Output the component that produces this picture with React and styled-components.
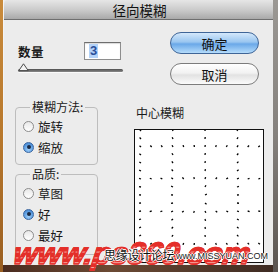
import React from "react";
import styled, { createGlobalStyle, css } from "styled-components";

const GlobalStyle = createGlobalStyle`
    html, body {
        margin: 0;
        padding: 0;
        background: #3a2f29;
        overflow: hidden;
    }
    body {
        font-family: "Noto Sans CJK SC", "Noto Sans", sans-serif;
    }
`

const Frame = styled.div`
    position: relative;
    display: flex;
    width: 278px;
    height: 272px;
    background: linear-gradient(90deg, #4a2b1f 0%, #6b4a34 40%, #3d2a22 100%);
    overflow: hidden;
`

const LeftEdge = styled.div`
    width: 3px;
    background: linear-gradient(180deg, #c98b3c 0%, #b8782c 50%, #9a5f22 100%);
`

const RightEdge = styled.div`
    flex: 1;
    background: linear-gradient(180deg, #9b9894 0%, #85817d 50%, #5a5450 100%);
`

const Window = styled.div`
    width: 270px;
    height: 265px;
    display: flex;
    flex-direction: column;
    background: #ececec;
    border-left: 1px solid #f4f4f4;
    box-sizing: border-box;
`

const TitleBar = styled.div`
    height: 20px;
    flex: none;
    display: flex;
    align-items: center;
    justify-content: center;
    background: linear-gradient(180deg, #e6e6e6 0%, #c9c9c9 55%, #a9a9a9 100%);
    border-bottom: 1px solid #6f6f6f;
    border-top-left-radius: 4px;
    box-sizing: border-box;
    font-size: 13.5px;
    color: #111;
    padding-left: 2px;
`

const Body = styled.div`
    flex: 1;
    padding-top: 12px;
`

const TopRow = styled.div`
    display: flex;
    justify-content: space-between;
    padding: 0 14px 0 13px;
`

const AmountBlock = styled.div`
    width: 107px;
    padding-top: 10px;
`

const AmountLine = styled.div`
    display: flex;
    align-items: center;
    justify-content: space-between;
    height: 18px;
    padding-right: 3px;
    padding-left: 1px;
`

const Label = styled.span`
    font-size: 12.5px;
    font-weight: 600;
    color: #1a1a1a;
    letter-spacing: 0.5px;
`

const NumberBox = styled.div`
    width: 37px;
    height: 18px;
    box-sizing: border-box;
    background: #fff;
    border: 1px solid #8e8e8e;
    border-top-color: #6e6e6e;
    box-shadow: inset 0 1px 1px rgba(0, 0, 0, 0.15);
    display: flex;
    align-items: center;
    padding-left: 4px;
`

const Selected = styled.span`
    background: #b4d3f8;
    color: #2a4f9a;
    font-family: "Liberation Sans", Arial, sans-serif;
    font-weight: bold;
    font-size: 13px;
    line-height: 14px;
    padding: 0 1px;
`

const Slider = styled.div`
    position: relative;
    margin-top: 6px;
    height: 8px;
    display: flex;
    align-items: center;
    padding-left: 1px;
`

const Track = styled.div`
    width: 105px;
    height: 3px;
    border-radius: 2px;
    background: linear-gradient(180deg, #4e4e4e, #8a8a8a);
    box-shadow: 0 1px 0 #fafafa;
`

const Thumb = styled.svg`
    position: absolute;
    left: 1px;
    top: -3px;
`

const ButtonColumn = styled.div`
    display: flex;
    flex-direction: column;
    gap: 9px;
`

const Button = styled.div`
    width: 89px;
    height: 22px;
    box-sizing: border-box;
    border-radius: 11px;
    display: flex;
    align-items: center;
    justify-content: center;
    font-size: 13px;
    color: #111;
    ${p => p.$primary ? css`
        border: 1px solid #3f6597;
        background: linear-gradient(180deg, #d4e8fb 0%, #9ac6f0 45%, #6aa8e8 55%, #b5dcfb 100%);
    ` : css`
        border: 1px solid #7c7c7c;
        background: linear-gradient(180deg, #ffffff 0%, #f2f2f2 45%, #e2e2e2 55%, #fbfbfb 100%);
    `}
`

const BottomRow = styled.div`
    display: flex;
    margin-top: 15px;
    padding-left: 11px;
    gap: 36px;
`

const LeftColumn = styled.div`
    width: 83px;
    display: flex;
    flex-direction: column;
    gap: 2px;
`

const Group = styled.fieldset`
    margin: 0;
    min-inline-size: 0;
    border: 1px solid #bdbdbd;
    border-radius: 4px;
    padding: 2px 0 ${p => p.$bottom}px 7px;
    display: flex;
    flex-direction: column;
    gap: 1px;
`

const Legend = styled.legend`
    margin-left: 7px;
    padding: 0 2px;
    font-size: 12px;
    line-height: 14px;
    color: #1a1a1a;
`

const RadioRow = styled.div`
    height: 20px;
    display: flex;
    align-items: center;
    gap: 4px;
    font-size: 12.5px;
    color: #1a1a1a;
`

const Circle = styled.span`
    width: 11px;
    height: 11px;
    border-radius: 50%;
    box-sizing: border-box;
    display: flex;
    align-items: center;
    justify-content: center;
    ${p => p.$on ? css`
        border: 1px solid #3a66a0;
        background: radial-gradient(circle at 50% 70%, #9fd0fb 0%, #5a9be0 60%, #3f7fc9 100%);
        &::after {
            content: "";
            width: 4px;
            height: 4px;
            border-radius: 50%;
            background: #1b2a44;
        }
    ` : css`
        border: 1px solid #8c8c8c;
        background: linear-gradient(180deg, #e8e8e8 0%, #ffffff 100%);
    `}
`

const PreviewColumn = styled.div`
    display: flex;
    flex-direction: column;
`

const PreviewLabel = styled.div`
    margin-top: 6px;
    padding-left: 2px;
    font-size: 12px;
    line-height: 14px;
    color: #1a1a1a;
`

const PreviewBox = styled.div`
    margin-top: 9px;
    width: 130px;
    height: 134px;
    box-sizing: border-box;
    border: 1px solid #111;
    background: #fff;
`

const Watermark = styled.div`
    position: absolute;
    left: 14px;
    top: 238px;
    font-family: "Liberation Sans", Arial, sans-serif;
    font-weight: bold;
    font-style: italic;
    font-size: 31px;
    line-height: 32px;
    letter-spacing: -0.3px;
    color: #e3302b;
    background: repeating-linear-gradient(180deg, #e62e28 0px, #e62e28 4px, #f8b4ad 4px, #f8b4ad 5px);
    -webkit-background-clip: text;
    background-clip: text;
    -webkit-text-fill-color: transparent;
    -webkit-text-stroke: 1.2px #e3302b;
    transform: skewX(-8deg);
`

const SiteName = styled.div`
    position: absolute;
    left: 104px;
    top: 247px;
    font-size: 12px;
    line-height: 16px;
    letter-spacing: -0.3px;
    color: #111;
    text-shadow: 1px 0 0 #fff, -1px 0 0 #fff, 0 1px 0 #fff, 0 -1px 0 #fff;
`

const SiteUrl = styled.div`
    position: absolute;
    left: 176px;
    top: 250px;
    font-family: "Liberation Sans", Arial, sans-serif;
    font-size: 9px;
    line-height: 12px;
    color: #222;
    text-shadow: 1px 0 0 #fff, -1px 0 0 #fff, 0 1px 0 #fff, 0 -1px 0 #fff;
`

const dots = (() => {
    const list = [];
    const cx = 64;
    const cy = 68;
    const add = (x, y) => {
        const dx = x - cx;
        const dy = y - cy;
        const len = Math.hypot(dx, dy) || 1;
        list.push([x, y, x + (dx / len) * 2, y + (dy / len) * 2]);
    };
    [6, 38, 70, 102].forEach(x => {
        for (let y = 1; y < 131; y += 8) add(x, y);
    });
    [17, 49, 81, 113].forEach(y => {
        for (let x = 6 + 32 / 3; x < 128; x += 32 / 3) {
            if (Math.abs(((x - 6) % 32)) > 1 && Math.abs(((x - 6) % 32) - 32) > 1) add(x, y);
        }
    });
    return list;
})();

const RadialPreview = () => (
    <svg width="128" height="132" viewBox="0 0 128 132">
        {dots.map(([x1, y1, x2, y2], i) => (
            <line key={i} x1={x1} y1={y1} x2={x2} y2={y2} stroke="#000" strokeWidth="1.3" />
        ))}
    </svg>
)

const Radio = ({ on, children }) => (
    <RadioRow>
        <Circle $on={on} />
        {children}
    </RadioRow>
)

const App = () => {
    return (
        <Frame>
            <GlobalStyle />
            <LeftEdge />
            <Window>
                <TitleBar>径向模糊</TitleBar>
                <Body>
                    <TopRow>
                        <AmountBlock>
                            <AmountLine>
                                <Label>数量</Label>
                                <NumberBox><Selected>3</Selected></NumberBox>
                            </AmountLine>
                            <Slider>
                                <Track />
                                <Thumb width="11" height="9" viewBox="0 0 11 9">
                                    <path d="M5.5 0.8 L10.2 7.6 L0.8 7.6 Z" fill="#f4f4f4" stroke="#4a4a4a" strokeWidth="1" />
                                </Thumb>
                            </Slider>
                        </AmountBlock>
                        <ButtonColumn>
                            <Button $primary>确定</Button>
                            <Button>取消</Button>
                        </ButtonColumn>
                    </TopRow>
                    <BottomRow>
                        <LeftColumn>
                            <Group $bottom={7}>
                                <Legend>模糊方法:</Legend>
                                <Radio>旋转</Radio>
                                <Radio on>缩放</Radio>
                            </Group>
                            <Group $bottom={9}>
                                <Legend>品质:</Legend>
                                <Radio>草图</Radio>
                                <Radio on>好</Radio>
                                <Radio>最好</Radio>
                            </Group>
                        </LeftColumn>
                        <PreviewColumn>
                            <PreviewLabel>中心模糊</PreviewLabel>
                            <PreviewBox>
                                <RadialPreview />
                            </PreviewBox>
                        </PreviewColumn>
                    </BottomRow>
                </Body>
            </Window>
            <RightEdge />
            <Watermark>www.ps360.com</Watermark>
            <SiteName>思缘设计论坛</SiteName>
            <SiteUrl>www.MISSYUAN.COM</SiteUrl>
        </Frame>
    );
}

export default App;
